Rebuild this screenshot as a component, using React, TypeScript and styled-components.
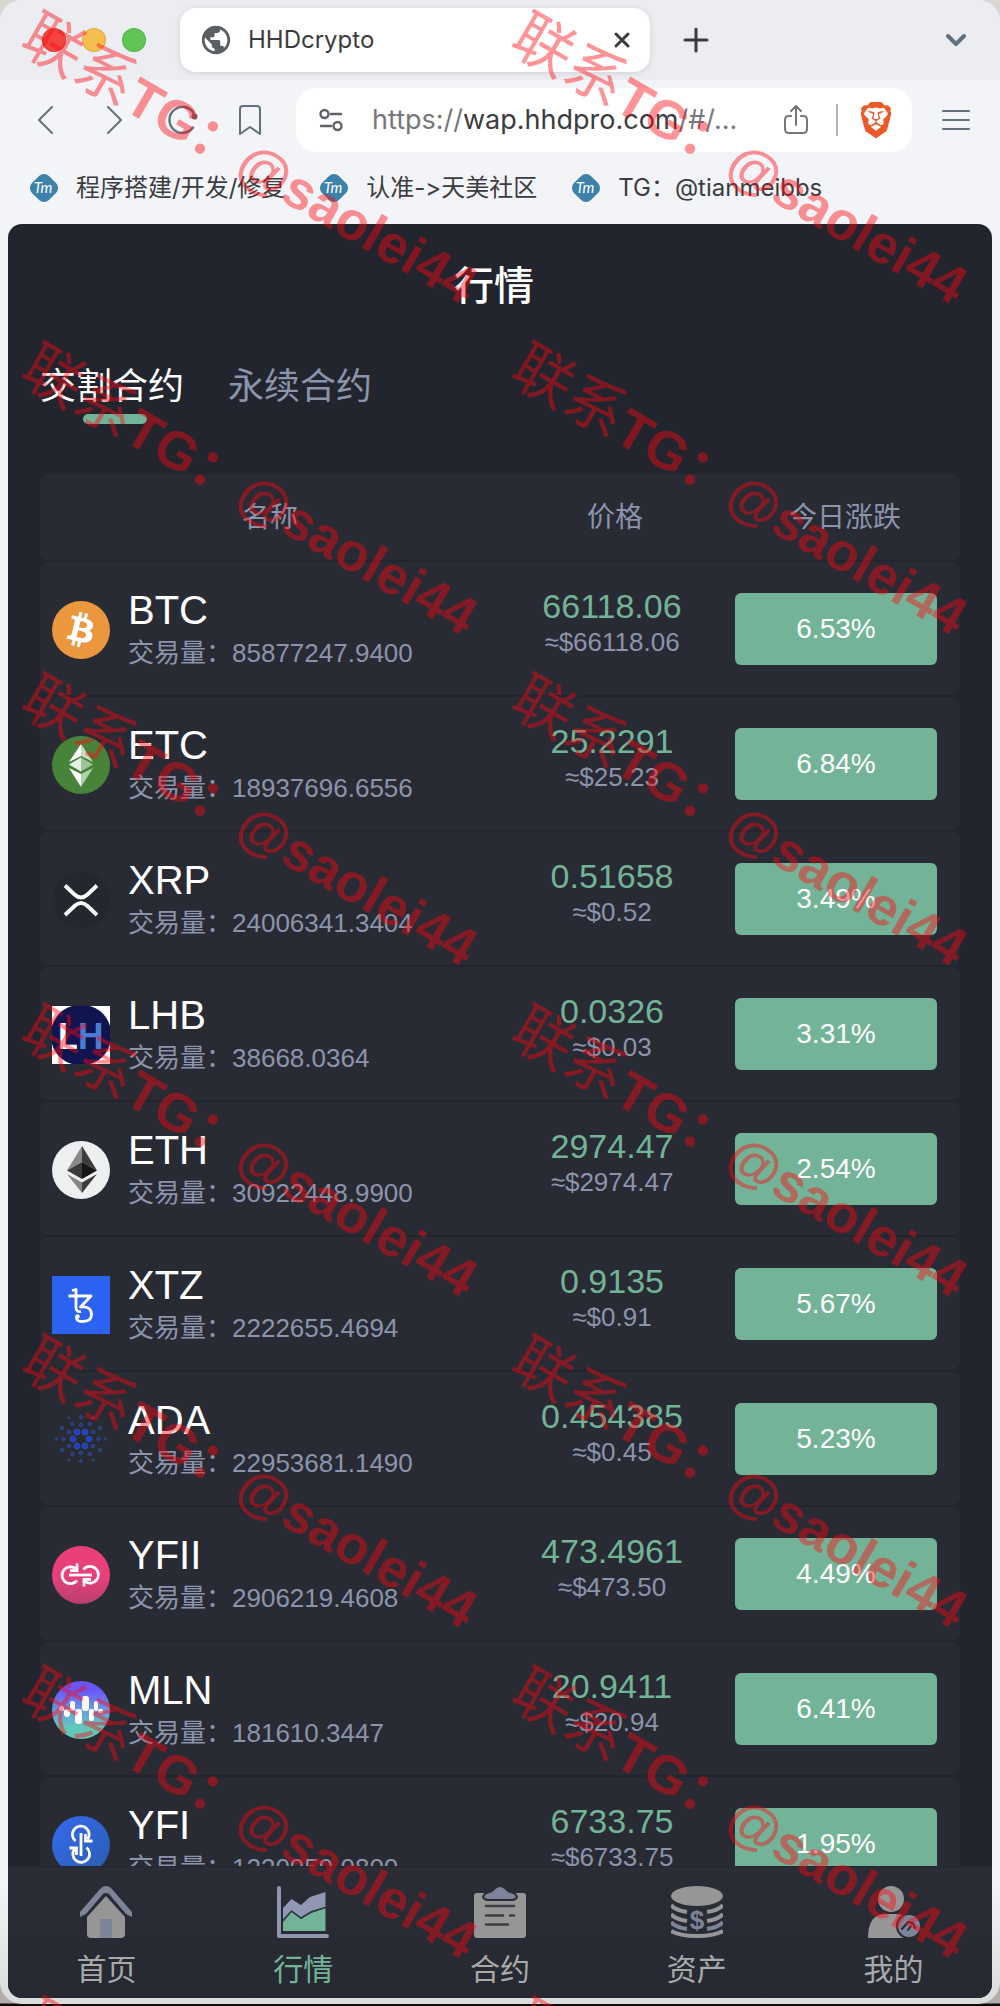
import React from "react";
import styled, { createGlobalStyle, css } from "styled-components";
import { MdPublic } from "react-icons/md";
import { FaBitcoin } from "react-icons/fa";
import { SiBrave } from "react-icons/si";

const sans = `"Liberation Sans", "Noto Sans CJK SC", sans-serif`;
const ui = `Inter, "Noto Sans CJK SC", sans-serif`;

const color = {
  chrome: "#f2f4f7",
  strip: "#ebedf1",
  ink: "#3a3c40",
  icon: "#63717d",
  page: "#22252e",
  card: "#282b34",
  muted: "#8c94ab",
  green: "#73b397",
  grey: "#969697",
  slate: "#7d8497",
};

const GlobalStyle = createGlobalStyle`
  * { box-sizing: border-box; }
  body { margin: 0; background: #d9d5d2; font-family: ${sans}; }
  button { font: inherit; color: inherit; background: none; border: 0; padding: 0; margin: 0; cursor: pointer; }
  a { color: inherit; text-decoration: none; }
  svg { display: block; flex: none; }
`;

/* ---------- window ---------- */

const Desktop = styled.div`
  position: relative;
  height: 100vh;
  overflow: hidden;
  padding-bottom: 2px;
  background: linear-gradient(#dad6d2 50%, #b0adaa calc(100% - 3px), #0c0a0a calc(100% - 2px));
`;

const Window = styled.div`
  height: 100%;
  display: flex;
  flex-direction: column;
  overflow: hidden;
  border-radius: 22px;
  background: linear-gradient(${color.chrome} 94%, #dadbdc);
`;

const TabStrip = styled.header`
  flex: none;
  height: 80px;
  display: flex;
  align-items: center;
  padding: 0 34px 0 42px;
  background: ${color.strip};
  color: ${color.ink};
`;

const Lights = styled.div`
  display: flex;
  gap: 16px;
  margin-right: 34px;
`;

const Light = styled.button<{ $fill: string }>`
  && {
    width: 24px;
    height: 24px;
    border-radius: 50%;
    background: ${(p) => p.$fill};
    box-shadow: inset 0 0 0 1px rgba(0, 0, 0, 0.1);
  }
`;

const BrowserTab = styled.div`
  flex: 0 1 470px;
  height: 64px;
  display: flex;
  align-items: center;
  gap: 15px;
  padding: 0 18px 0 19px;
  border-radius: 16px;
  background: #fff;
  box-shadow: 0 1px 6px rgba(0, 0, 0, 0.12);
  font: 400 24px/32px ${ui};
`;

const BrowserTabTitle = styled.span`
  flex: 1;
`;

const StripButton = styled.button<{ $push?: boolean }>`
  && {
    margin-left: ${(p) => (p.$push ? "auto" : "32px")};
    color: ${(p) => (p.$push ? color.icon : color.ink)};
  }
`;

const Toolbar = styled.div`
  flex: none;
  height: 80px;
  display: flex;
  align-items: center;
  gap: 40px;
  padding: 0 30px 0 32px;
  color: ${color.icon};
`;

const AddressBar = styled.div`
  flex: 1;
  min-width: 0;
  height: 64px;
  display: flex;
  align-items: center;
  gap: 28px;
  margin: 0 -10px 0 -6px;
  padding: 0 18px 0 22px;
  border-radius: 20px;
  background: #fff;
  color: #75777b;
`;

const Address = styled.button`
  && {
    flex: 1;
    min-width: 0;
    text-align: left;
    white-space: nowrap;
    font: 400 27px/40px ${ui};
  }
  b {
    font-weight: 400;
    color: ${color.ink};
  }
`;

const Divider = styled.span`
  width: 2px;
  height: 32px;
  margin-right: -8px;
  background: #b4b5b8;
`;

const Bookmarks = styled.nav`
  flex: none;
  height: 64px;
  display: flex;
  align-items: center;
  gap: 34px;
  padding: 0 29px 8px;
  color: ${color.ink};
  font: 400 24px/32px ${ui};
  font-feature-settings: "calt" 0;
`;

const BookmarkLink = styled.a`
  display: flex;
  align-items: center;
  gap: 17px;
  white-space: nowrap;
`;

/* ---------- page ---------- */

const Page = styled.main`
  flex: 1;
  min-height: 0;
  display: flex;
  flex-direction: column;
  overflow: hidden;
  margin: 0 8px 6px;
  border-radius: 14px;
  background: ${color.page};
`;

const PageTitle = styled.h1`
  flex: none;
  margin: 0;
  padding-right: 12px;
  font-size: 40px;
  font-weight: 500;
  line-height: 124px;
  text-align: center;
  color: #fff;
`;

const ContractTabs = styled.div`
  flex: none;
  display: flex;
  gap: 38px;
  padding: 12px 32px 50px;
`;

const ContractTab = styled.button<{ $active?: boolean }>`
  && {
    min-width: 150px;
    text-align: left;
    font-size: 36px;
    line-height: 54px;
    color: ${(p) => (p.$active ? "#fff" : color.muted)};
  }
  &::after {
    content: "";
    display: block;
    width: 64px;
    height: 10px;
    margin: 0 auto;
    border-radius: 5px;
    background: ${(p) => (p.$active ? color.green : "transparent")};
  }
`;

const MarketScroll = styled.div`
  flex: 1;
  min-height: 0;
  overflow-y: auto;
  padding: 0 32px;
  scrollbar-width: none;
`;

const Market = styled.table`
  display: grid;
  gap: 2px;

  thead,
  tbody {
    display: grid;
    gap: 2px;
  }
`;

const rowBase = css`
  display: grid;
  grid-template-columns: minmax(0, 2fr) minmax(0, 1fr) minmax(0, 1fr);
  border-radius: 8px;
  background: ${color.card};
`;

const HeadRow = styled.tr`
  ${rowBase}
  th {
    padding: 2px 0 0;
    font-size: 28px;
    font-weight: 400;
    line-height: 84px;
    color: ${color.muted};
  }
`;

const Row = styled.tr`
  ${rowBase}
  padding: 25px 12px 22px;
  td {
    padding: 0;
  }
`;

const CoinCell = styled.div`
  display: flex;
  align-items: center;
  gap: 18px;
`;

const Symbol = styled.div`
  font-size: 40px;
  line-height: 46px;
  color: #fff;
`;

const Volume = styled.div`
  font-size: 26px;
  line-height: 40px;
  color: ${color.muted};
`;

const PriceCell = styled.td`
  text-align: center;
`;

const Price = styled.div`
  font-size: 34px;
  line-height: 38px;
  color: ${color.green};
`;

const Approx = styled.div`
  font-size: 26px;
  line-height: 34px;
  color: ${color.muted};
`;

const Change = styled.div`
  width: 90%;
  margin: 6px auto 0;
  border-radius: 6px;
  background: ${color.green};
  color: #fff;
  font-size: 28px;
  line-height: 72px;
  text-align: center;
`;

const BottomNav = styled.nav`
  flex: none;
  display: flex;
  padding: 19px 0 6px;
  border-top: 1px solid #23262d;
  background: linear-gradient(#2a2d36, #262932);
`;

const NavItem = styled.a<{ $active?: boolean }>`
  flex: 1;
  display: flex;
  flex-direction: column;
  align-items: center;
  gap: 10px;
  font-size: 30px;
  line-height: 44px;
  color: ${(p) => (p.$active ? color.green : "#a9a9aa")};
`;

/* ---------- watermark ---------- */

const Watermark = styled.div`
  position: absolute;
  inset: 0;
  overflow: hidden;
  pointer-events: none;
  display: grid;
  grid-template-columns: repeat(auto-fill, 490px);
  grid-auto-rows: 331px;
`;

const Mark = styled.span`
  justify-self: start;
  align-self: start;
  margin: 3px 0 0 27px;
  transform: rotate(30deg);
  transform-origin: left center;
  white-space: nowrap;
  font-size: 54px;
  line-height: 56px;
  font-weight: 700;
  color: rgba(255, 6, 16, 0.43);

  span {
    font-size: 60px;
    font-weight: 400;
  }
`;

/* ---------- browser icons ---------- */

type LineProps = { w: number; h: number; d: string; sw?: number };

const Line = ({ w, h, d, sw = 2 }: LineProps) => (
  <svg width={w} height={h} viewBox={`0 0 ${w} ${h}`} fill="none" stroke="currentColor" strokeWidth={sw} strokeLinecap="round" strokeLinejoin="round">
    <path d={d} />
  </svg>
);

const ReloadIcon = () => (
  <svg width="30" height="30" viewBox="0 0 30 30" fill="none" stroke="currentColor" strokeWidth="2.4" strokeLinecap="round">
    <path d="M25 22.5A13 13 0 1 1 25.5 8" />
    <circle cx="26.5" cy="11.5" r="3" fill="currentColor" stroke="none" />
  </svg>
);

const TuneIcon = () => (
  <svg width="26" height="26" viewBox="0 0 26 26" fill="none" stroke="#5f6368" strokeWidth="2.4" strokeLinecap="round">
    <circle cx="6.5" cy="7" r="4" />
    <path d="M13 7h10M3 19h10" />
    <circle cx="19.5" cy="19" r="4" />
  </svg>
);

const TmLogo = () => (
  <svg width="30" height="30" viewBox="0 0 30 30" aria-hidden="true">
    <rect x="3" y="3" width="24" height="24" rx="7" fill="#3c82aa" transform="rotate(45 15 15)" />
    <text x="14" y="20" textAnchor="middle" fill="#fff" fontSize="15" fontStyle="italic" fontFamily="Lato, sans-serif">Tm</text>
  </svg>
);

/* ---------- coin logos ---------- */

const Coin = ({ children }: { children: React.ReactNode }) => (
  <svg width="58" height="58" viewBox="0 0 58 58" aria-hidden="true">{children}</svg>
);

const BtcLogo = () => (
  <Coin>
    <circle cx="29" cy="29" r="29" fill="#ea973d" />
    <circle cx="29" cy="29" r="25" fill="#fff" />
    <FaBitcoin size={58} color="#ea973d" />
  </Coin>
);

const EtcLogo = () => (
  <Coin>
    <circle cx="29" cy="29" r="29" fill="#47843a" />
    <path d="M29 8 17 26l12-6z" fill="#fff" />
    <path d="M29 8l12 18-12-6z" fill="#c4dcc0" />
    <path d="M29 21.500 17 28.500l12 7z" fill="#e6f0e4" />
    <path d="M29 21.500l12 7-12 7z" fill="#9fc39a" />
    <path d="M17 32l12 19V38z" fill="#fff" />
    <path d="M41 32 29 51V38z" fill="#b3d0ae" />
  </Coin>
);

const XrpLogo = () => (
  <Coin>
    <circle cx="29" cy="29" r="29" fill="#23282e" />
    <path d="M13 14.500 22.500 23.500q6.500 6 13 0L45 14.500M13 44 22.500 35q6.500-6 13 0L45 44" fill="none" stroke="#fff" strokeWidth="3.800" />
  </Coin>
);

const LhbLogo = () => (
  <Coin>
    <rect width="58" height="58" fill="#fff" />
    <path d="M20 0h18A30 30 0 0 1 58 20v18A30 30 0 0 1 38 58H20A30 30 0 0 1 0 38V20A30 30 0 0 1 20 0z" fill="#10154f" />
    <text x="6" y="43" fontSize="36" fontWeight="700" fill="#fff" fontFamily="Roboto, sans-serif">L</text>
    <text x="26" y="43" fontSize="36" fontWeight="700" fill="#4a7cd6" fontFamily="Roboto, sans-serif">H</text>
  </Coin>
);

const EthLogo = () => (
  <Coin>
    <circle cx="29" cy="29" r="29" fill="#edeff0" />
    <path d="M30 5 15 29.500 30 21z" fill="#8a8a8a" />
    <path d="M30 5l15 24.500L30 21z" fill="#3c3c3d" />
    <path d="M15 29.500 30 21v17z" fill="#3a3a3b" />
    <path d="M45 29.500 30 21v17z" fill="#161617" />
    <path d="M15 33l15 8.500V52z" fill="#858585" />
    <path d="M45 33l-15 8.500V52z" fill="#3c3c3d" />
  </Coin>
);

const XtzLogo = () => (
  <Coin>
    <rect width="58" height="58" fill="#2c63f2" />
    <path
      d="M20 14.500l4-1v18q0 5 5 4M16.500 20H39L28.500 31q11-1 11 7.500 0 7-9 7-7 0-6-5"
      fill="none"
      stroke="#fff"
      strokeWidth="2.800"
      strokeLinejoin="round"
    />
    <circle cx="25.500" cy="40.500" r="2.200" fill="#fff" />
  </Coin>
);

const rings = [
  { radius: 8, dot: 3, turn: 0, fill: true },
  { radius: 14, dot: 1.8, turn: 30, fill: false },
  { radius: 17.5, dot: 1.7, turn: 0, fill: false },
  { radius: 22, dot: 1.5, turn: 30, fill: false },
  { radius: 24.5, dot: 1, turn: 0, fill: false },
];

const AdaLogo = () => (
  <Coin>
    {rings.map((ring) =>
      [0, 60, 120, 180, 240, 300].map((step) => {
        const a = ((step + ring.turn) * Math.PI) / 180;
        return (
          <circle
            key={`${ring.radius}-${step}`}
            cx={29 + ring.radius * Math.cos(a)}
            cy={28 + ring.radius * Math.sin(a)}
            r={ring.dot}
            fill={ring.fill ? "#1d40c4" : "#28356e"}
            stroke="#3450a8"
            strokeWidth="0.800"
          />
        );
      })
    )}
  </Coin>
);

/* Two hooked loops joined by a bar; YFII lays it flat, YFI stands it up. */
const Loops = () => (
  <g fill="none" stroke="#fff" strokeWidth="2.800">
    <path d="M17 29h23" />
    <path d="M25 34.500a8.400 8.400 0 1 1-1.500-12" />
    <path d="M31.500 23.500a8.400 8.400 0 1 1 1.500 12" />
    <path d="M18 24.500h7v-7M39 33.500h-7v7" />
  </g>
);

const YfiiLogo = () => (
  <Coin>
    <linearGradient id="yfii" x1="0" y1="0" x2="0" y2="1">
      <stop offset="0.500" stopColor="#ea4079" />
      <stop offset="1" stopColor="#b83f70" />
    </linearGradient>
    <circle cx="29" cy="29" r="29" fill="url(#yfii)" />
    <Loops />
  </Coin>
);

const YfiLogo = () => (
  <Coin>
    <linearGradient id="yfi" x1="0" y1="0" x2="1" y2="1">
      <stop offset="0" stopColor="#356bf0" />
      <stop offset="1" stopColor="#2a5cb0" />
    </linearGradient>
    <circle cx="29" cy="29" r="29" fill="url(#yfi)" />
    <g transform="rotate(90 29 29)"><Loops /></g>
  </Coin>
);

const MlnLogo = () => (
  <Coin>
    <linearGradient id="mln" x1="0" y1="0" x2="0" y2="1">
      <stop offset="0.150" stopColor="#6a55f5" />
      <stop offset="0.500" stopColor="#6b9be0" />
      <stop offset="0.800" stopColor="#5fc9bb" />
    </linearGradient>
    <circle cx="29" cy="29" r="29" fill="url(#mln)" />
    <g fill="#fff">
      <rect x="7" y="25" width="5" height="5" rx="2" />
      <rect x="12" y="28" width="6" height="8" rx="3" />
      <rect x="18" y="20" width="5" height="10" rx="2" />
      <rect x="23" y="28" width="7" height="15" rx="3" />
      <rect x="30" y="15" width="7" height="15" rx="3" />
      <rect x="37" y="28" width="5" height="12" rx="2" />
      <rect x="42" y="20" width="4" height="10" rx="2" />
      <rect x="46" y="28" width="5" height="4" rx="2" />
    </g>
  </Coin>
);

/* ---------- navigation icons ---------- */

const NavIcon = ({ children }: { children: React.ReactNode }) => (
  <svg width="52" height="52" viewBox="0 0 52 52" aria-hidden="true">{children}</svg>
);

const HomeIcon = () => (
  <NavIcon>
    <path d="M0 31v-5L21 2q5-4 10 0l21 24v5L46 28 29 8q-3-2-6 0L6 28z" fill={color.slate} />
    <path d="M7 31 26 10l19 21v17q0 4-4 4H11q-4 0-4-4z" fill={color.grey} />
    <path d="M20 33h12v19H20z" fill={color.slate} />
  </NavIcon>
);

const ChartIcon = () => (
  <NavIcon>
    <path d="M2 2v48h48" fill="none" stroke="#8f97b0" strokeWidth="4" strokeLinecap="round" strokeLinejoin="round" />
    <path d="M6 22l8.500-9 9.500 6 9-8 15.500-5v15l-14 4-10 7-10-7L6 34z" fill="#8f97b2" />
    <path d="M6 36l8.500-10 9.500 7 10-6 14.500-5v23H6z" fill={color.green} />
    <path d="M6 34.500 14.500 25l9.500 7 10-6 14.500-4.500" fill="none" stroke="#2f3a45" strokeWidth="1.500" />
  </NavIcon>
);

const ClipboardIcon = () => (
  <NavIcon>
    <rect y="7" width="52" height="45" rx="3" fill={color.grey} />
    <path d="M9 11q1-4 7-5 3-1 5-4 5-4 10 0 2 3 5 4 6 1 7 5-1 3-5 3H14q-4 0-5-3z" fill={color.slate} stroke={color.card} strokeWidth="2" />
    <path d="M12 20h28M12 29.500h17M36 29.500h4M12 38.500h22" fill="none" stroke="#3d3f46" strokeWidth="2.500" strokeLinecap="round" />
  </NavIcon>
);

const CoinsIcon = () => (
  <NavIcon>
    <ellipse cx="26" cy="10" rx="26" ry="10" fill={color.grey} />
    <g fill="none" strokeWidth="4">
      <path d="M0 19q4 5 16 7M52 19q-4 5-16 7M0 28q4 5 16 7M52 28q-4 5-16 7" stroke={color.grey} />
      <path d="M0 36q4 5 16 7M52 36q-4 5-16 7" stroke={color.slate} />
      <path d="M0 45q8 5 26 5t26-5" stroke={color.grey} />
    </g>
    <text x="26" y="43" textAnchor="middle" fontSize="26" fontWeight="700" fill={color.slate} fontFamily='"Liberation Sans", sans-serif'>$</text>
  </NavIcon>
);

const UserIcon = () => (
  <NavIcon>
    <circle cx="23" cy="13" r="13" fill={color.grey} />
    <path d="M0 52q0-24 17-24h11q9 0 14 9L36 52z" fill={color.grey} />
    <circle cx="41" cy="40" r="12" fill={color.slate} stroke={color.card} strokeWidth="2" />
    <path d="M34 43l6-7 5 1 2 5M40 44l3-4" fill="none" stroke={color.card} strokeWidth="2" strokeLinecap="round" />
  </NavIcon>
);

/* ---------- data ---------- */

const coins = [
  { symbol: "BTC", Logo: BtcLogo, volume: "85877247.9400", price: "66118.06", usd: "66118.06", change: "6.53%" },
  { symbol: "ETC", Logo: EtcLogo, volume: "18937696.6556", price: "25.2291", usd: "25.23", change: "6.84%" },
  { symbol: "XRP", Logo: XrpLogo, volume: "24006341.3404", price: "0.51658", usd: "0.52", change: "3.49%" },
  { symbol: "LHB", Logo: LhbLogo, volume: "38668.0364", price: "0.0326", usd: "0.03", change: "3.31%" },
  { symbol: "ETH", Logo: EthLogo, volume: "30922448.9900", price: "2974.47", usd: "2974.47", change: "2.54%" },
  { symbol: "XTZ", Logo: XtzLogo, volume: "2222655.4694", price: "0.9135", usd: "0.91", change: "5.67%" },
  { symbol: "ADA", Logo: AdaLogo, volume: "22953681.1490", price: "0.454385", usd: "0.45", change: "5.23%" },
  { symbol: "YFII", Logo: YfiiLogo, volume: "2906219.4608", price: "473.4961", usd: "473.50", change: "4.49%" },
  { symbol: "MLN", Logo: MlnLogo, volume: "181610.3447", price: "20.9411", usd: "20.94", change: "6.41%" },
  { symbol: "YFI", Logo: YfiLogo, volume: "1230959.0800", price: "6733.75", usd: "6733.75", change: "1.95%" },
];

const navItems = [
  { label: "首页", Icon: HomeIcon },
  { label: "行情", Icon: ChartIcon, active: true },
  { label: "合约", Icon: ClipboardIcon },
  { label: "资产", Icon: CoinsIcon },
  { label: "我的", Icon: UserIcon },
];

const bookmarks = ["程序搭建/开发/修复", "认准->天美社区", "TG：@tianmeibbs"];

export default function App() {
  return (
    <Desktop>
      <GlobalStyle />
      <Window>
        <TabStrip>
          <Lights>
            <Light $fill="#f0453f" aria-label="Close window" />
            <Light $fill="#f5be4f" aria-label="Minimize window" />
            <Light $fill="#5fc454" aria-label="Zoom window" />
          </Lights>
          <BrowserTab>
            <MdPublic size={34} color="#5b5f64" />
            <BrowserTabTitle>HHDcrypto</BrowserTabTitle>
            <button aria-label="Close tab"><Line w={20} h={20} sw={3} d="M4 4l12 12M16 4L4 16" /></button>
          </BrowserTab>
          <StripButton aria-label="New tab"><Line w={28} h={28} sw={3} d="M14 3v22M3 14h22" /></StripButton>
          <StripButton $push aria-label="Search tabs"><Line w={20} h={16} sw={4} d="M2 4l8 8 8-8" /></StripButton>
        </TabStrip>

        <Toolbar>
          <button aria-label="Back"><Line w={28} h={28} d="M20 1L7 14l13 13" /></button>
          <button aria-label="Forward"><Line w={28} h={28} d="M8 1l13 13L8 27" /></button>
          <button aria-label="Reload"><ReloadIcon /></button>
          <button aria-label="Bookmark"><Line w={24} h={30} d="M2 4q0-3 3-3h14q3 0 3 3v25l-10-7-10 7z" /></button>
          <AddressBar>
            <button aria-label="Site settings"><TuneIcon /></button>
            <Address>https://<b>wap.hhdpro.com</b>/#/...</Address>
            <button aria-label="Share"><Line w={24} h={30} d="M7 11H5q-4 0-4 4v9q0 4 4 4h14q4 0 4-4v-9q0-4-4-4h-2M12 20V2M7 6l5-5 5 5" /></button>
            <Divider />
            <button aria-label="Brave Shields"><SiBrave size={36} color="#ec5a29" /></button>
          </AddressBar>
          <button aria-label="Menu"><Line w={28} h={22} d="M1 2h26M1 11h26M1 20h26" /></button>
        </Toolbar>

        <Bookmarks aria-label="Bookmarks">
          {bookmarks.map((label) => (
            <BookmarkLink href="#" key={label}><TmLogo />{label}</BookmarkLink>
          ))}
        </Bookmarks>

        <Page>
          <PageTitle>行情</PageTitle>
          <ContractTabs role="tablist">
            <ContractTab role="tab" aria-selected="true" $active>交割合约</ContractTab>
            <ContractTab role="tab" aria-selected="false">永续合约</ContractTab>
          </ContractTabs>
          <MarketScroll>
            <Market>
              <thead>
                <HeadRow>
                  <th scope="col">名称</th>
                  <th scope="col">价格</th>
                  <th scope="col">今日涨跌</th>
                </HeadRow>
              </thead>
              <tbody>
                {coins.map(({ symbol, Logo, volume, price, usd, change }) => (
                  <Row key={symbol}>
                    <td>
                      <CoinCell>
                        <Logo />
                        <div>
                          <Symbol>{symbol}</Symbol>
                          <Volume>交易量：{volume}</Volume>
                        </div>
                      </CoinCell>
                    </td>
                    <PriceCell>
                      <Price>{price}</Price>
                      <Approx>≈${usd}</Approx>
                    </PriceCell>
                    <td><Change>{change}</Change></td>
                  </Row>
                ))}
              </tbody>
            </Market>
          </MarketScroll>
          <BottomNav>
            {navItems.map(({ label, Icon, active }) => (
              <NavItem href="#" key={label} $active={active}><Icon />{label}</NavItem>
            ))}
          </BottomNav>
        </Page>
      </Window>

      <Watermark>
        {Array.from({ length: 14 }, (_, i) => (
          <Mark key={i}><span>联系</span>TG：@saolei44</Mark>
        ))}
      </Watermark>
    </Desktop>
  );
}
